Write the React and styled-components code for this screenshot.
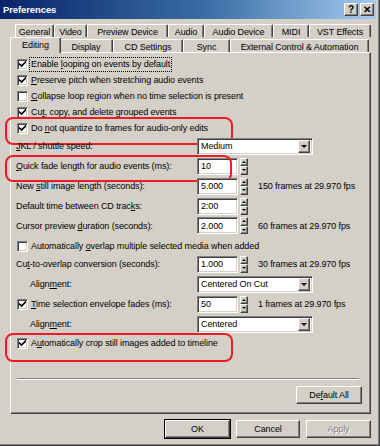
import React from "react";
import styled, { createGlobalStyle, css } from "styled-components";

const GlobalStyle = createGlobalStyle`
  html, body { margin: 0; padding: 0; background: #d4d0c8; }
  body {
    font-family: "Liberation Sans", Arial, sans-serif;
    font-size: 9px;
    letter-spacing: -0.1px;
    color: #000;
  }
  * { box-sizing: border-box; }
  u { text-decoration: underline; text-underline-offset: 1px; }
`;

const raised = css`
  background: #d4d0c8;
  border-top: 1px solid #fff;
  border-left: 1px solid #fff;
  border-right: 1px solid #404040;
  border-bottom: 1px solid #404040;
  box-shadow: inset -1px -1px #808080;
`;

const sunken = css`
  background: #fff;
  border-top: 1px solid #808080;
  border-left: 1px solid #808080;
  border-right: 1px solid #fff;
  border-bottom: 1px solid #fff;
  box-shadow: inset 1px 1px #404040, inset -1px -1px #d4d0c8;
`;

const Window = styled.div`
  width: 380px;
  height: 446px;
  display: flex;
  flex-direction: column;
  background: #d4d0c8;
  border-right: 1px solid #404040;
  border-bottom: 1px solid #404040;
  box-shadow: inset -1px -1px #808080;
`;

const TitleBar = styled.div`
  height: 19px;
  margin-right: 3px;
  display: flex;
  align-items: center;
  padding: 0 2px 0 3px;
  background: linear-gradient(to right, #0a246a, #3a6ea5 55%, #a6caf0);
  color: #fff;
  font-weight: bold;
  font-size: 9.5px;
  letter-spacing: -0.1px;
`;

const Title = styled.span`
  flex: 1;
`;

const CaptionButton = styled.div`
  ${raised};
  width: 14px;
  height: 13px;
  margin-left: ${(p) => (p.gap ? "2px" : "0")};
  display: flex;
  align-items: center;
  justify-content: center;
  color: #000;
  font-weight: bold;
  font-size: 10px;
  line-height: 1;
`;

const Body = styled.div`
  flex: 1;
  display: flex;
  flex-direction: column;
  padding: 5px 8px 0 10px;
`;

const TabRow = styled.div`
  display: flex;
  align-items: flex-end;
  height: ${(p) => (p.front ? 15 : 13)}px;
  padding-left: ${(p) => p.indent}px;
  position: relative;
  z-index: ${(p) => (p.front ? 2 : 1)};
`;

const Tab = styled.div`
  width: ${(p) => p.w}px;
  height: 13px;
  display: flex;
  align-items: center;
  justify-content: center;
  background: #d4d0c8;
  border-top: 1px solid #fff;
  border-left: 1px solid #fff;
  border-right: 1px solid #404040;
  box-shadow: inset -1px 0 #808080;
  border-radius: 2px 2px 0 0;
  white-space: nowrap;
  padding-top: 1px;
  ${(p) =>
    p.active &&
    css`
      height: 16px;
      margin: 0 -2px -1px 0;
      position: relative;
      z-index: 3;
      padding-bottom: 2px;
    `}
`;

const Panel = styled.div`
  ${raised};
  height: 362px;
  display: flex;
  flex-direction: column;
  padding: 3px 8px 0 5px;
`;

const markCss = (m) => css`
  &::after {
    content: "";
    position: absolute;
    left: -11px;
    top: ${m.top}px;
    width: ${m.w}px;
    height: ${m.h}px;
    border: 2.5px solid #ec1c24;
    border-radius: 8px;
    pointer-events: none;
  }
`;

const CheckRow = styled.div`
  position: relative;
  height: 16px;
  margin-top: ${(p) => p.mt || 0}px;
  display: flex;
  align-items: center;
  padding-left: 1px;
  ${(p) => p.mark && markCss(p.mark)}
`;

const InlineCheck = styled.span`
  display: inline-flex;
  align-items: center;
  padding-left: 1px;
`;

const Box = styled.span`
  ${sunken};
  width: 11px;
  height: 11px;
  flex: none;
  display: inline-flex;
  align-items: center;
  justify-content: center;
`;

const CheckText = styled.span`
  margin-left: 1px;
  padding: 1px 1px 2px;
  border: 1px dotted ${(p) => (p.focus ? "#000" : "transparent")};
  white-space: nowrap;
`;

const FormRow = styled.div`
  position: relative;
  height: ${(p) => p.h || 20}px;
  display: grid;
  grid-template-columns: 181px auto 1fr;
  align-items: center;
  ${(p) => p.mark && markCss(p.mark)}
`;

const Label = styled.span`
  padding-left: ${(p) => (p.indent ? 14 : 0)}px;
  white-space: nowrap;
`;

const Spin = styled.div`
  display: flex;
  align-items: center;
  gap: 2px;
  width: 61px;
`;

const Field = styled.div`
  ${sunken};
  width: ${(p) => p.w}px;
  height: 17px;
  display: flex;
  align-items: center;
  padding-left: 3px;
`;

const SpinButtons = styled.div`
  display: flex;
  flex-direction: column;
  width: 8px;
  height: 17px;
`;

const SpinBtn = styled.div`
  ${raised};
  flex: 1;
  display: flex;
  align-items: center;
  justify-content: center;
`;

const Arrow = styled.span`
  width: 0;
  height: 0;
  border-left: ${(p) => p.s}px solid transparent;
  border-right: ${(p) => p.s}px solid transparent;
  ${(p) =>
    p.up
      ? css`border-bottom: ${p.s}px solid #000;`
      : css`border-top: ${p.s}px solid #000;`}
`;

const Info = styled.span`
  white-space: nowrap;
`;

const Select = styled.div`
  ${sunken};
  width: 116px;
  height: 17px;
  display: flex;
  align-items: center;
  padding: 0 2px 0 3px;
  grid-column: span 2;
`;

const SelectText = styled.span`
  flex: 1;
`;

const DropBtn = styled.div`
  ${raised};
  width: 12px;
  height: 13px;
  display: flex;
  align-items: center;
  justify-content: center;
`;

const Spacer = styled.div`
  flex: 1;
`;

const Separator = styled.div`
  margin: 0 3px 0 1px;
  border-top: 1px solid #808080;
  border-bottom: 1px solid #fff;
`;

const ButtonRow = styled.div`
  display: flex;
  justify-content: flex-end;
  gap: 6px;
  padding: ${(p) => p.pad};
`;

const Button = styled.div`
  ${raised};
  width: ${(p) => p.w || 65}px;
  height: 18px;
  display: flex;
  align-items: center;
  justify-content: center;
  color: ${(p) => (p.disabled ? "#808080" : "#000")};
  text-shadow: ${(p) => (p.disabled ? "1px 1px #fff" : "none")};
  ${(p) =>
    p.primary &&
    css`
      outline: 1px solid #000;
      outline-offset: 0;
    `}
`;

const Check = () => (
  <svg width="7" height="7" viewBox="0 0 7 7">
    <path d="M0 2.5 L2.5 5 L7 0.5" fill="none" stroke="#000" strokeWidth="1.6" />
  </svg>
);

const CheckItem = ({ checked, focus, mt, mark, children }) => (
  <CheckRow mt={mt} mark={mark}>
    <Box>{checked && <Check />}</Box>
    <CheckText focus={focus}>{children}</CheckText>
  </CheckRow>
);

const SpinField = ({ value }) => (
  <Spin>
    <Field w={41}>{value}</Field>
    <SpinButtons>
      <SpinBtn>
        <Arrow up s={2} />
      </SpinBtn>
      <SpinBtn>
        <Arrow s={2} />
      </SpinBtn>
    </SpinButtons>
  </Spin>
);

const Dropdown = ({ value }) => (
  <Select>
    <SelectText>{value}</SelectText>
    <DropBtn>
      <Arrow s={3} />
    </DropBtn>
  </Select>
);

const backTabs = [
  ["General", 39],
  ["Video", 33],
  ["Preview Device", 81],
  ["Audio", 36],
  ["Audio Device", 69],
  ["MIDI", 36],
  ["VST Effects", 62],
];

const frontTabs = [
  ["Editing", 51],
  ["Display", 54],
  ["CD Settings", 70],
  ["Sync", 47],
  ["External Control & Automation", 139],
];

export default function App() {
  return (
    <Window>
      <GlobalStyle />
      <TitleBar>
        <Title>Preferences</Title>
        <CaptionButton>?</CaptionButton>
        <CaptionButton gap>✕</CaptionButton>
      </TitleBar>
      <Body>
        <TabRow indent={5}>
          {backTabs.map(([t, w]) => (
            <Tab key={t} w={w}>
              {t}
            </Tab>
          ))}
        </TabRow>
        <TabRow front indent={0}>
          {frontTabs.map(([t, w], i) => (
            <Tab key={t} w={w} active={i === 0}>
              {t}
            </Tab>
          ))}
        </TabRow>
        <Panel>
          <CheckItem checked focus>
            Enable <u>l</u>ooping on events by default
          </CheckItem>
          <CheckItem checked>
            <u>P</u>reserve pitch when stretching audio events
          </CheckItem>
          <CheckItem>
            <u>C</u>ollapse loop region when no time selection is present
          </CheckItem>
          <CheckItem checked>
            Cu<u>t</u>, copy, and delete grouped events
          </CheckItem>
          <CheckItem checked mark={{ top: -3, w: 224, h: 24 }}>
            Do <u>n</u>ot quantize to frames for audio-only edits
          </CheckItem>

          <FormRow>
            <Label>
              <u>J</u>KL / shuttle speed:
            </Label>
            <Dropdown value="Medium" />
          </FormRow>
          <FormRow mark={{ top: -1, w: 223, h: 23 }}>
            <Label>
              <u>Q</u>uick fade length for audio events (ms):
            </Label>
            <SpinField value="10" />
          </FormRow>
          <FormRow>
            <Label>
              New <u>s</u>till image length (seconds):
            </Label>
            <SpinField value="5.000" />
            <Info>150 frames at 29.970 fps</Info>
          </FormRow>
          <FormRow>
            <Label>
              Default time between CD trac<u>k</u>s:
            </Label>
            <SpinField value="2:00" />
          </FormRow>
          <FormRow h={19}>
            <Label>
              Cursor preview <u>d</u>uration (seconds):
            </Label>
            <SpinField value="2.000" />
            <Info>60 frames at 29.970 fps</Info>
          </FormRow>

          <CheckItem mt={3}>
            Automatically <u>o</u>verlap multiple selected media when added
          </CheckItem>
          <FormRow>
            <Label>
              Cu<u>t</u>-to-overlap conversion (seconds):
            </Label>
            <SpinField value="1.000" />
            <Info>30 frames at 29.970 fps</Info>
          </FormRow>
          <FormRow>
            <Label indent>
              Align<u>m</u>ent:
            </Label>
            <Dropdown value="Centered On Cut" />
          </FormRow>
          <FormRow>
            <Label>
              <InlineCheck>
                <Box>
                  <Check />
                </Box>
                <CheckText>
                  <u>T</u>ime selection envelope fades (ms):
                </CheckText>
              </InlineCheck>
            </Label>
            <SpinField value="50" />
            <Info>1 frames at 29.970 fps</Info>
          </FormRow>
          <FormRow>
            <Label indent>
              Align<u>m</u>ent:
            </Label>
            <Dropdown value="Centered" />
          </FormRow>
          <CheckItem checked mt={1} mark={{ top: -2, w: 224, h: 25 }}>
            A<u>u</u>tomatically crop still images added to timeline
          </CheckItem>

          <Spacer />
          <Separator />
          <ButtonRow pad="6px 0 9px">
            <Button w={66}>
              De<u>f</u>ault All
            </Button>
          </ButtonRow>
        </Panel>
        <ButtonRow pad="6px 0 0">
          <Button primary>OK</Button>
          <Button w={64}>Cancel</Button>
          <Button disabled>Apply</Button>
        </ButtonRow>
      </Body>
    </Window>
  );
}
